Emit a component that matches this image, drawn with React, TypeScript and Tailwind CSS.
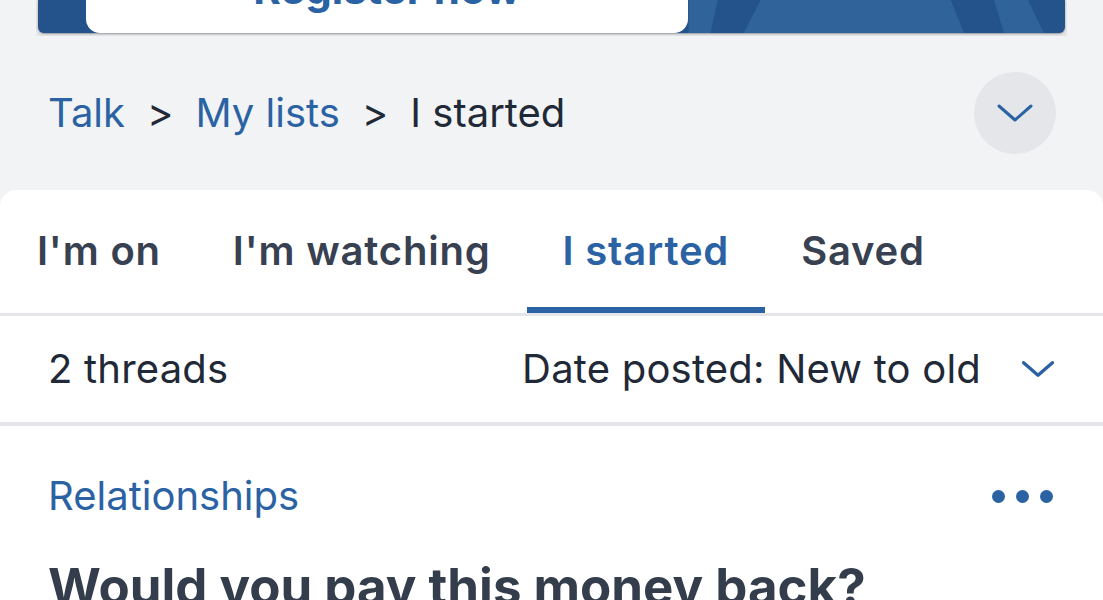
const blue = 'text-[#2b62a3]';

const ChevronDown = ({ className, sw = 3 }: { className?: string; sw?: number }) => (
  <svg viewBox="0 0 36 20" className={className} fill="none">
    <path d="M2 3 L18 17 L34 3" stroke="currentColor" strokeWidth={sw} strokeLinecap="round" strokeLinejoin="round" />
  </svg>
);

const Banner = () => (
  <div className="mx-[36px] h-[36px] bg-[#e4e6ea] pb-[3px] px-[2px]">
    <div className="relative flex h-full overflow-hidden rounded-b-[6px] bg-[#24528a] shadow-[0_1px_2px_rgba(0,0,0,0.35)]">
      {/* stripes */}
      <svg className="absolute inset-0 h-full w-full" viewBox="0 0 1026 33" preserveAspectRatio="none">
        <polygon points="650,0 679,0 672,33 650,33" fill="#30639a" />
        <polygon points="722,0 912,0 925,33 705,33" fill="#30639a" />
        <polygon points="955,0 989,0 1005,33 965,33" fill="#30639a" />
      </svg>
      <div className="relative ml-[48px] flex w-[602px] justify-center overflow-hidden rounded-b-[14px] bg-white">
        <span className={`-mt-[31px] text-[42px] font-bold leading-[40px] ${blue}`}>Register now</span>
      </div>
    </div>
  </div>
);

const Breadcrumb = () => (
  <div className="flex h-[154px] items-center justify-between pl-[48px] pr-[47px] text-[40px]">
    <div className="flex items-center gap-[22px]">
      <span className={blue}>Talk</span>
      <span className="text-[#1f2937]">&gt;</span>
      <span className={blue}>My lists</span>
      <span className="text-[#1f2937]">&gt;</span>
      <span className="text-[#1f2937]">I started</span>
    </div>
    <button className="flex h-[82px] w-[82px] items-center justify-center rounded-full bg-[#e4e6ea]">
      <ChevronDown className={`h-[20px] w-[36px] ${blue}`} />
    </button>
  </div>
);

const tabs = ["I'm on", "I'm watching", 'I started', 'Saved'];

const Tabs = () => (
  <div className="flex h-[126px] border-b-[3px] border-[#e4e6ea] pl-[1px]">
    {tabs.map((t) => {
      const active = t === 'I started';
      return (
        <div
          key={t}
          className={`flex items-center px-[36px] pt-[4px] text-[40px] font-semibold tracking-[0.02em] ${
            active ? `${blue} border-b-[6px] border-[#2b62a3]` : 'border-b-[6px] border-transparent text-[#374151]'
          }`}
        >
          {t}
        </div>
      );
    })}
  </div>
);

export default function App() {
  return (
    <div className="h-[600px] overflow-hidden bg-[#f2f3f5] font-['Inter',sans-serif]">
      <Banner />
      <Breadcrumb />
      <div className="rounded-t-[16px] bg-white">
        <Tabs />
        {/* Sort row */}
        <div className="flex h-[110px] items-center justify-between border-b-[4px] border-[#e4e6ea] pl-[48px] pr-[48px] text-[40px] tracking-[0.005em] text-[#1f2937]">
          <span>2 threads</span>
          <div className="flex items-center gap-[40px]">
            <span>Date posted: New to old</span>
            <ChevronDown className={`h-[18px] w-[34px] ${blue}`} sw={3.8} />
          </div>
        </div>
        {/* Thread */}
        <div className="px-[48px] pt-[40px]">
          <div className="flex items-center justify-between">
            <span className={`text-[40px] ${blue}`}>Relationships</span>
            <div className="mr-[2px] flex gap-[11px]">
              <span className="h-[13px] w-[13px] rounded-full bg-[#2b62a3]" />
              <span className="h-[13px] w-[13px] rounded-full bg-[#2b62a3]" />
              <span className="h-[13px] w-[13px] rounded-full bg-[#2b62a3]" />
            </div>
          </div>
          <h2 className="mt-[29px] text-[51px] font-bold leading-[64px] text-[#333d4b]">Would you pay this money back?</h2>
        </div>
      </div>
    </div>
  );
}
